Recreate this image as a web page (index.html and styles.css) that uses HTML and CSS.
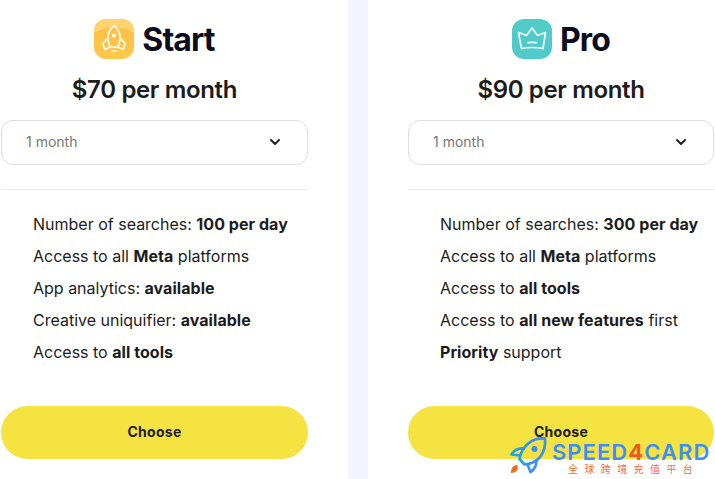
FILE: index.html
```html
<!DOCTYPE html>
<html lang="en">
<head>
  <meta charset="UTF-8" />
  <meta name="viewport" content="width=device-width, initial-scale=1.0"/>
  <title>Pricing</title>
  <link rel="stylesheet" href="styles.css">
</head>
<body>

  <div class="plans">
    <!-- Start -->
    <div class="plan plan-start">
      <div class="plan-header">
        <svg class="plan-icon" viewBox="0 0 40 40">
          <defs>
            <linearGradient id="orange" x1="0" y1="0" x2="0" y2="1">
              <stop offset="0" stop-color="#fdbd42"/>
              <stop offset="1" stop-color="#ffc94b"/>
            </linearGradient>
          </defs>
          <rect width="40" height="40" rx="12" fill="url(#orange)"/>
          <path d="M0 14V12A12 12 0 0 1 12 0H28A12 12 0 0 1 40 12V14C30 7 10 7 0 14Z" fill="#ffd36d"/>
          <g fill="none" stroke="#fffbe9" stroke-width="1.7" stroke-linecap="round" stroke-linejoin="round">
            <path d="M20 6.700C15 11 13.500 16 13.800 20.500L16 28H24L26.200 20.500C26.500 16 25 11 20 6.700Z"/>
            <path d="M13.600 19.500L8.800 24.500L10.800 30.500L16 28M26.400 19.500L31.200 24.500L29.200 30.500L24 28M17.500 32H22.500"/>
          </g>
          <circle cx="20" cy="16.500" r="2" fill="#fffbe9"/>
        </svg>
        <h2 class="plan-name">Start</h2>
      </div>
      <div class="plan-price">$70 per month</div>
      <div class="select">
        <span>1 month</span>
        <svg class="chevron" viewBox="0 0 12 8"><path d="M2 2L6 6L10 2"/></svg>
      </div>
      <ul class="features">
        <li>Number of searches: <b>100 per day</b></li>
        <li>Access to all <b>Meta</b> platforms</li>
        <li>App analytics: <b>available</b></li>
        <li>Creative uniquifier: <b>available</b></li>
        <li>Access to <b>all tools</b></li>
      </ul>
      <button class="btn">Choose</button>
    </div>

    <!-- Pro -->
    <div class="plan plan-pro">
      <div class="plan-header">
        <svg class="plan-icon" viewBox="0 0 40 40">
          <rect width="40" height="40" rx="12" fill="#50cbca"/>
          <g fill="none" stroke="#f2ffff" stroke-width="1.700" stroke-linecap="round" stroke-linejoin="round">
            <path d="M6.500 13.500L14.500 16.500L20 9L25.500 16.500L33.500 13.500L31 29.500Q20 27.500 9.500 29.500Z"/>
            <path d="M16 23.700Q20 23 24.500 23.700"/>
          </g>
        </svg>
        <h2 class="plan-name">Pro</h2>
      </div>
      <div class="plan-price">$90 per month</div>
      <div class="select">
        <span>1 month</span>
        <svg class="chevron" viewBox="0 0 12 8"><path d="M2 2L6 6L10 2"/></svg>
      </div>
      <ul class="features">
        <li>Number of searches: <b>300 per day</b></li>
        <li>Access to all <b>Meta</b> platforms</li>
        <li>Access to <b>all tools</b></li>
        <li>Access to <b>all new features</b> first</li>
        <li><b>Priority</b> support</li>
      </ul>
      <button class="btn">Choose</button>
    </div>
  </div>

  <!-- Watermark logo -->
  <div class="watermark">
    <svg class="rocket" viewBox="0 0 40 40">
      <defs>
        <linearGradient id="blue" x1="0" y1="0" x2="1" y2="0">
          <stop offset="0" stop-color="#16a9e8"/>
          <stop offset="0.500" stop-color="#3b8ff5"/>
        </linearGradient>
      </defs>
      <g fill="none" stroke="url(#blue)" stroke-width="2.700" stroke-linejoin="round">
        <path d="M36 2.500C24 1.500 13 9 10.500 23L15.500 28.500C30 27 37 17 36 2.500Z"/>
        <path d="M16 12.500C9 11.500 5 14 2.500 18.500L11 19.500M27.500 24C27.500 30 25 34 21.500 36L18.500 28.500"/>
      </g>
      <circle cx="25.500" cy="13" r="3" fill="#3b8ff5"/>
      <path d="M8.500 29C4 29 2 32 2 37C7 37 9.500 34 8.500 29Z" fill="#f36b1c"/>
    </svg>
    <div class="watermark-text">
      <div class="watermark-name">SPEED<span>4</span>CARD</div>
      <div class="watermark-sub">全球跨境充值平台</div>
    </div>
  </div>

</body>
</html>
```
FILE: styles.css
```css
body {
  margin: 0;
  background: #f4f4fe;
  color: #1c1c1c;
  font-family: Inter, sans-serif;
  overflow: hidden;
}

.plans {
  display: flex;
  gap: 20px;
  height: 479px;
}

.plan {
  box-sizing: border-box;
  display: flex;
  flex-direction: column;
  background: #fff;
}

.plan-start {
  width: 348px;
  padding: 19px 40px 0 1px;
}

.plan-pro {
  width: 347px;
  padding: 19px 1px 0 40px;
}

.plan-header {
  display: flex;
  justify-content: center;
  align-items: center;
  gap: 8px;
  height: 40px;
}

.plan-icon {
  width: 40px;
  height: 40px;
}

.plan-name {
  margin: 2px 0 0;
  color: #0c0c1c;
  font-size: 32px;
  line-height: 40px;
  font-weight: 700;
  letter-spacing: -0.9px;
}

.plan-price {
  margin-top: 15px;
  font-size: 24px;
  line-height: 32px;
  font-weight: 600;
  letter-spacing: -0.35px;
  text-align: center;
}

.select {
  box-sizing: border-box;
  display: flex;
  justify-content: space-between;
  align-items: center;
  height: 45px;
  margin-top: 14px;
  padding: 0 26px 2px 24px;
  border: 1px solid #dedfe2;
  border-radius: 12px;
  color: #777;
  font-size: 14px;
}

.chevron {
  width: 12px;
  height: 8px;
  fill: none;
  stroke: #222;
  stroke-width: 2;
  stroke-linecap: round;
  stroke-linejoin: round;
}

.features {
  list-style: none;
  margin: 24px 0 0;
  padding: 18px 0 0 32px;
  border-top: 1px solid #e6e6ee;
  font-size: 16px;
  line-height: 32px;
  white-space: nowrap;
}

.features b {
  font-weight: 700;
  letter-spacing: 0.05px;
}

.btn {
  height: 53px;
  margin-top: 38px;
  padding: 0 0 2px;
  border: none;
  border-radius: 27px;
  background: #f5e342;
  color: #1c1c1c;
  font-family: Inter, sans-serif;
  font-size: 14px;
  font-weight: 700;
  letter-spacing: 0.3px;
}

/* sits over the bottom right corner */
.watermark {
  position: absolute;
  left: 509px;
  top: 436px;
  display: flex;
  gap: 3px;
}

.rocket {
  width: 40px;
  height: 40px;
}

.watermark-name {
  height: 27px;
  padding-top: 6px;
  box-sizing: border-box;
  color: #3b8ff5;
  font-size: 22px;
  line-height: 21px;
  font-weight: 600;
  letter-spacing: 1.05px;
  white-space: nowrap;
}

.watermark-name span {
  color: #f25a1d;
  font-weight: 700;
}

.watermark-sub {
  padding-left: 16px;
  color: #f36b35;
  font-family: "Noto Sans CJK SC", sans-serif;
  font-size: 10px;
  line-height: 11px;
  letter-spacing: 6.400px;
  white-space: nowrap;
}
```
